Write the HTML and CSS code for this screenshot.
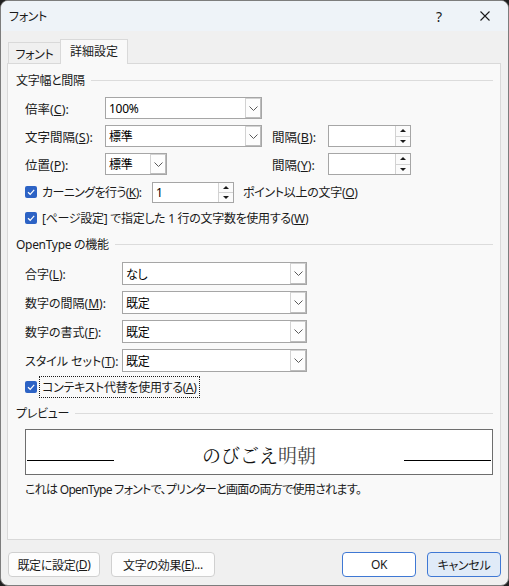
FILE: index.html
```html
<!DOCTYPE html>
<html lang="ja">
<head>
<meta charset="utf-8">
<title>フォント</title>
<link rel="stylesheet" href="styles.css">
</head>
<body>
<div class="window">
  <div class="titlebar">
    <span class="title">フォント</span>
    <span class="tb-btn tb-help">?</span>
    <span class="tb-btn tb-close"><svg width="10" height="10" viewBox="0 0 10 10"><path d="M0.5 0.5 L9.5 9.5 M9.5 0.5 L0.5 9.5" stroke="#1a1a1a" stroke-width="1.1" fill="none"/></svg></span>
  </div>
  <div class="tabs">
    <div class="tab">フォント</div>
    <div class="tab active">詳細設定</div>
  </div>
  <div class="panel">
    <div class="group-head"><span>文字幅と間隔</span><i class="rule"></i></div>
    <div class="grid1">
      <span class="lbl">倍率(<u>C</u>):</span>
      <div class="select s157"><span class="val">100%</span><span class="drop"><svg width="9" height="5" viewBox="0 0 9 5"><polyline points="0.5,0.5 4.5,4.5 8.5,0.5" fill="none" stroke="#5a5a5a" stroke-width="1"/></svg></span></div>
      <span></span><span></span>

      <span class="lbl">文字間隔(<u>S</u>):</span>
      <div class="select s157"><span class="val">標準</span><span class="drop"><svg width="9" height="5" viewBox="0 0 9 5"><polyline points="0.5,0.5 4.5,4.5 8.5,0.5" fill="none" stroke="#5a5a5a" stroke-width="1"/></svg></span></div>
      <span class="lbl">間隔(<u>B</u>):</span>
      <div class="spin s83"><span class="val"></span><span class="spinbtns"><span class="sb up"></span><span class="sb down"></span></span></div>

      <span class="lbl">位置(<u>P</u>):</span>
      <div class="select s62"><span class="val">標準</span><span class="drop"><svg width="9" height="5" viewBox="0 0 9 5"><polyline points="0.5,0.5 4.5,4.5 8.5,0.5" fill="none" stroke="#5a5a5a" stroke-width="1"/></svg></span></div>
      <span class="lbl">間隔(<u>Y</u>):</span>
      <div class="spin s83"><span class="val"></span><span class="spinbtns"><span class="sb up"></span><span class="sb down"></span></span></div>
    </div>
    <div class="row r28">
      <span class="check"><svg width="12" height="12" viewBox="0 0 12 12"><polyline points="3,6.2 5.2,8.3 9.2,3.8" fill="none" stroke="#fff" stroke-width="1.2"/></svg></span>
      <span class="clbl kern">カーニングを行う(<u>K</u>):</span>
      <div class="spin s82"><span class="val">1</span><span class="spinbtns"><span class="sb up"></span><span class="sb down"></span></span></div>
      <span class="after">ポイント以上の文字(<u>O</u>)</span>
    </div>
    <div class="row r24">
      <span class="check"><svg width="12" height="12" viewBox="0 0 12 12"><polyline points="3,6.2 5.2,8.3 9.2,3.8" fill="none" stroke="#fff" stroke-width="1.2"/></svg></span>
      <span class="clbl">[ページ設定] で指定した 1 行の文字数を使用する(<u>W</u>)</span>
    </div>

    <div class="group-head g2"><span>OpenType の機能</span><i class="rule"></i></div>
    <div class="rows2">
      <div class="row r29"><span class="lbl w97">合字(<u>L</u>):</span>
        <div class="select s185"><span class="val">なし</span><span class="drop"><svg width="9" height="5" viewBox="0 0 9 5"><polyline points="0.5,0.5 4.5,4.5 8.5,0.5" fill="none" stroke="#5a5a5a" stroke-width="1"/></svg></span></div></div>
      <div class="row r29"><span class="lbl w97">数字の間隔(<u>M</u>):</span>
        <div class="select s185"><span class="val">既定</span><span class="drop"><svg width="9" height="5" viewBox="0 0 9 5"><polyline points="0.5,0.5 4.5,4.5 8.5,0.5" fill="none" stroke="#5a5a5a" stroke-width="1"/></svg></span></div></div>
      <div class="row r29"><span class="lbl w97">数字の書式(<u>F</u>):</span>
        <div class="select s185"><span class="val">既定</span><span class="drop"><svg width="9" height="5" viewBox="0 0 9 5"><polyline points="0.5,0.5 4.5,4.5 8.5,0.5" fill="none" stroke="#5a5a5a" stroke-width="1"/></svg></span></div></div>
      <div class="row r29"><span class="lbl w97">スタイル セット(<u>T</u>):</span>
        <div class="select s185"><span class="val">既定</span><span class="drop"><svg width="9" height="5" viewBox="0 0 9 5"><polyline points="0.5,0.5 4.5,4.5 8.5,0.5" fill="none" stroke="#5a5a5a" stroke-width="1"/></svg></span></div></div>
    </div>
    <div class="row r24">
      <span class="check"><svg width="12" height="12" viewBox="0 0 12 12"><polyline points="3,6.2 5.2,8.3 9.2,3.8" fill="none" stroke="#fff" stroke-width="1.2"/></svg></span>
      <span class="clbl focus">コンテキスト代替を使用する(<u>A</u>)</span>
    </div>

    <div class="group-head g3"><span>プレビュー</span><i class="rule"></i></div>
    <div class="preview">
      <i class="pline"></i>
      <span class="ptext">のびごえ<span class="kanji">明朝</span></span>
      <i class="pline"></i>
    </div>
    <div class="desc">これは OpenType フォントで、プリンターと画面の両方で使用されます。</div>
  </div>
  <div class="buttons">
    <span class="btn b91">既定に設定(<u>D</u>)</span>
    <span class="btn b103">文字の効果(<u>E</u>)...</span>
    <span class="spacer"></span>
    <span class="btn b73 default">OK</span>
    <span class="btn b73 cancel">キャンセル</span>
  </div>
</div>
</body>
</html>
```
FILE: styles.css
```css
* { box-sizing: border-box; }
html, body { margin: 0; padding: 0; background: #202020; }
body {
  font-family: "Noto Sans", "Noto Sans CJK JP", sans-serif;
  font-size: 12px;
  color: #1a1a1a;
  font-feature-settings: "palt";
  letter-spacing: -0.3px;
}
u { text-decoration: underline; text-underline-offset: 1px; text-decoration-thickness: 1px; }

.window {
  width: 509px;
  height: 586px;
  background: #f0f0f0;
  border: 1px solid #7d7d7d;
  border-radius: 8px;
  overflow: hidden;
  display: flex;
  flex-direction: column;
}

.titlebar {
  height: 30px;
  flex: none;
  background: #eef3f8;
  display: flex;
  align-items: center;
  padding-left: 8px;
}
.title { flex: 1; font-size: 12px; }
.tb-btn {
  width: 46px;
  height: 30px;
  display: flex;
  align-items: center;
  justify-content: center;
}
.tb-help { font-size: 14px; font-family: "Noto Sans", sans-serif; }

.tabs {
  margin-top: 8px;
  height: 24px;
  flex: none;
  display: flex;
  align-items: flex-end;
  padding-left: 7px;
}
.tab {
  height: 21px;
  width: 52px;
  border: 1px solid #d9d9d9;
  border-right: none;
  border-bottom: none;
  display: flex;
  align-items: center;
  justify-content: center;
  padding-top: 1px;
}
.tab.active {
  position: relative;
  height: 25px;
  width: 68px;
  margin-bottom: -1px;
  border-right: 1px solid #d9d9d9;
  background: #f9f9f9;
  padding-top: 0;
  padding-bottom: 2px;
  letter-spacing: 0;
}

.panel {
  flex: none;
  margin-left: 6px;
  width: 494px;
  height: 477px;
  background: #f9f9f9;
  border: 1px solid #d9d9d9;
  padding: 7px 7px 0 8px;
}

.group-head {
  height: 18px;
  display: flex;
  align-items: center;
}
.group-head .rule {
  flex: 1;
  height: 1px;
  background: #dcdcdc;
  margin-left: 6px;
  margin-top: 1px;
}
.g2 { margin-top: 5px; }
.g3 { margin-top: 5px; }

.grid1 {
  margin-top: 5px;
  padding-left: 9px;
  display: grid;
  grid-template-columns: 80px 167px 56px 83px;
  grid-auto-rows: 28px;
  align-items: center;
}
.grid1 .lbl { font-size: 12.5px; letter-spacing: 0; }

.row {
  display: flex;
  align-items: center;
  padding-left: 9px;
}
.r28 { height: 28px; }
.r24 { height: 24px; }
.r29 { height: 29px; }
.rows2 { margin-top: 6px; }

.lbl { white-space: nowrap; }
.w97 { width: 97px; flex: none; letter-spacing: 0; }

.select, .spin {
  display: flex;
  height: 22px;
  border: 1px solid #a6a6a6;
  background: #fff;
}
.select .val, .spin .val {
  flex: 1;
  padding-left: 3px;
  display: flex;
  align-items: center;
  color: #000;
}
.select .drop {
  width: 16px;
  flex: none;
  border: 1px solid #d2d2d2;
  border-right-color: #bcbcbc;
  border-bottom-color: #bcbcbc;
  background: #fdfdfd;
  display: flex;
  align-items: center;
  justify-content: center;
}
.s157 { width: 157px; }
.s62 { width: 62px; }
.s83 { width: 83px; height: 22px; }
.s82 { width: 82px; height: 21px; }
.s185 { width: 185px; height: 23px; }

.spinbtns {
  width: 15px;
  flex: none;
  display: flex;
  flex-direction: column;
  border-left: 1px solid #d2d2d2;
}
.sb {
  flex: 1;
  display: flex;
  align-items: center;
  justify-content: center;
  background: #fbfbfb;
}
.sb.up { border-bottom: 1px solid #d2d2d2; }
.sb.up::before {
  content: "";
  border-left: 3px solid transparent;
  border-right: 3px solid transparent;
  border-bottom: 3px solid #1a1a1a;
}
.sb.down::before {
  content: "";
  border-left: 3px solid transparent;
  border-right: 3px solid transparent;
  border-top: 3px solid #1a1a1a;
}

.check {
  width: 12px;
  height: 12px;
  flex: none;
  background: #2d63c5;
  border-radius: 2px;
  display: flex;
}
.clbl { margin-left: 5px; white-space: nowrap; }
.kern { width: 110px; flex: none; letter-spacing: -0.6px; }
.after { margin-left: 9px; }
.focus {
  outline: 1px dotted #1a1a1a;
  outline-offset: 1px;
  padding: 0 1px;
  margin-left: 4px;
}

.preview {
  margin-top: 7px;
  margin-left: 9px;
  width: 468px;
  height: 46px;
  background: #fff;
  border: 1px solid #6e6e6e;
  display: flex;
  align-items: flex-end;
  justify-content: space-between;
  padding: 0 1px 13px 1px;
}
.pline {
  width: 87px;
  height: 1px;
  background: #000;
}
.ptext {
  font-family: "Noto Serif CJK JP", "Noto Sans CJK JP", serif;
  font-feature-settings: normal;
  letter-spacing: 0;
  font-size: 19px;
  line-height: 19px;
  color: #111;
  margin-bottom: -3px;
  font-weight: 400;
}
.kanji { color: #444; }

.desc {
  margin-top: 5px;
  margin-left: 9px;
  height: 18px;
  display: flex;
  align-items: center;
  letter-spacing: -0.7px;
}

.buttons {
  margin-top: 12px;
  height: 25px;
  display: flex;
  padding: 0 7px 0 7px;
  gap: 11px;
}
.spacer { flex: 1; }
.btn {
  height: 25px;
  border: 1px solid #d0d0d0;
  border-radius: 4px;
  background: #fdfdfd;
  display: flex;
  align-items: center;
  justify-content: center;
  white-space: nowrap;
}
.b91 { width: 92px; }
.b103 { width: 104px; }
.b73 { width: 74px; }
.default { border-color: #3f78d4; background: #fff; }
.cancel { border-color: #3f78d4; background: #e0ebf8; }
```
